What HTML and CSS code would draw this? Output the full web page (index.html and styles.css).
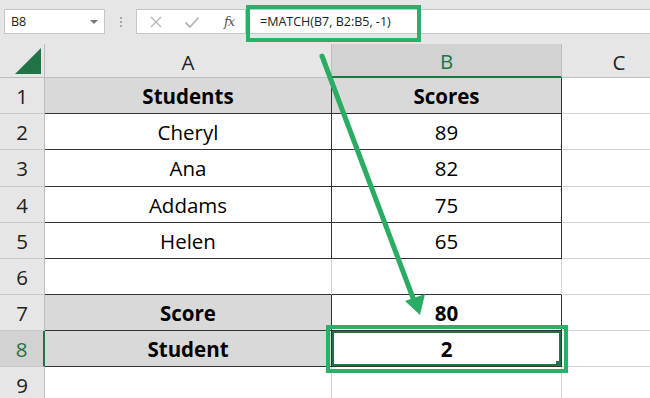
FILE: index.html
```html
<!DOCTYPE html>
<html>
<head>
<meta charset="utf-8">
<link rel="stylesheet" href="styles.css">
</head>
<body>
<div class="app">
  <div class="fbar">
    <div class="namebox"><span class="nb-text">B8</span><span class="nb-arrow"></span></div>
    <div class="dots"><i></i><i></i><i></i></div>
    <div class="tools">
      <svg class="ico" width="14" height="14" viewBox="0 0 14 14"><path d="M2 2 L12 12 M12 2 L2 12" stroke="#b5b5b5" stroke-width="1.3" fill="none"/></svg>
      <svg class="ico" width="16" height="14" viewBox="0 0 16 14"><path d="M1.5 7.5 L6 12 L14.5 2.5" stroke="#b5b5b5" stroke-width="1.8" fill="none"/></svg>
      <span class="fx">fx</span>
    </div>
    <div class="finput"><span class="ftext">=MATCH(B7, B2:B5, -1)</span></div>
  </div>
  <div class="sheet">
    <div class="corner"><span class="tri"></span></div>
    <div class="ch">A</div>
    <div class="ch sel">B</div>
    <div class="ch last">C</div>

    <div class="rh">1</div>
    <div class="c fill b bd">Students</div>
    <div class="c fill b bd">Scores</div>
    <div class="c last"></div>

    <div class="rh">2</div>
    <div class="c bd">Cheryl</div>
    <div class="c bd">89</div>
    <div class="c last"></div>

    <div class="rh">3</div>
    <div class="c bd">Ana</div>
    <div class="c bd">82</div>
    <div class="c last"></div>

    <div class="rh">4</div>
    <div class="c bd">Addams</div>
    <div class="c bd">75</div>
    <div class="c last"></div>

    <div class="rh">5</div>
    <div class="c bd">Helen</div>
    <div class="c bd">65</div>
    <div class="c last"></div>

    <div class="rh">6</div>
    <div class="c bdb"></div>
    <div class="c bdb"></div>
    <div class="c last"></div>

    <div class="rh">7</div>
    <div class="c fill b bd">Score</div>
    <div class="c b bd">80</div>
    <div class="c last"></div>

    <div class="rh selr">8</div>
    <div class="c fill b bd">Student</div>
    <div class="c b bd active">2<span class="handle"></span></div>
    <div class="c last"></div>

    <div class="rh">9</div>
    <div class="c"></div>
    <div class="c"></div>
    <div class="c last"></div>
  </div>

  <div class="hl hl-formula"></div>
  <div class="hl hl-cell"></div>
  <svg class="arrow" width="650" height="398" viewBox="0 0 650 398">
    <line x1="322" y1="56" x2="413" y2="298" stroke="#2aad62" stroke-width="5" stroke-linecap="round"/>
    <polygon points="405,301 425,294 420,315" fill="#2aad62"/>
  </svg>
</div>
</body>
</html>
```

FILE: styles.css
```css
* { box-sizing: border-box; }
html, body { margin: 0; padding: 0; }
body { width: 650px; height: 398px; overflow: hidden; background: #fff; }
.app { position: relative; width: 650px; height: 398px; overflow: hidden; }

.fbar {
  height: 44px;
  background: #e6e6e6;
  display: flex;
  align-items: flex-start;
  padding-top: 9px;
  padding-left: 4px;
  font-family: "Open Sans", "Noto Sans", sans-serif;
}
.namebox {
  width: 101px; height: 25px;
  background: #fff;
  border: 1px solid #c6c6c6;
  display: flex; align-items: center; justify-content: space-between;
  padding: 0 6px 0 6px;
}
.nb-text { font-size: 12.5px; color: #222; }
.nb-arrow {
  width: 0; height: 0;
  border-left: 4px solid transparent; border-right: 4px solid transparent;
  border-top: 4px solid #777;
}
.dots {
  width: 31px; height: 25px;
  display: flex; flex-direction: column; align-items: center; justify-content: center; gap: 2px;
}
.dots i { display: block; width: 2px; height: 2px; background: #a8a8a8; }
.tools {
  width: 110px; height: 25px;
  background: #fff;
  border: 1px solid #c6c6c6;
  display: flex; align-items: center;
  padding-left: 12px; gap: 21px;
}
.fx { font-family: "DejaVu Serif", "Liberation Serif", serif; font-style: italic; font-size: 13px; color: #555; margin-left: 3px; letter-spacing: -1px; }
.finput {
  flex: 1; height: 25px;
  background: #fff;
  border-top: 1px solid #c6c6c6; border-bottom: 1px solid #c6c6c6;
  display: flex; align-items: center;
  padding-left: 14px;
}
.ftext { font-size: 12.5px; color: #222; }

.sheet {
  display: grid;
  grid-template-columns: 45px 287px 230px 115px;
  grid-template-rows: 34px 36px 36px 37px 36px 36px 36px 36px 36px 36px;
  font-family: "Open Sans", "Lato", sans-serif;
  font-size: 20.5px;
  color: #000;
}
.sheet > div {
  display: flex; align-items: center; justify-content: center;
  border-right: 1px solid #d4d4d4;
  border-bottom: 1px solid #d4d4d4;
  position: relative;
}
.corner { background: #e6e6e6; border-right-color: #bdbdbd !important; border-bottom-color: #bdbdbd !important; }
.tri {
  position: absolute; right: 3px; bottom: 3px;
  width: 0; height: 0;
  border-left: 26px solid transparent;
  border-bottom: 26px solid #217346;
}
.ch { background: #e6e6e6; color: #222; border-right-color: #bdbdbd !important; border-bottom-color: #bdbdbd !important; padding-top: 2px; }
.ch.sel { background: #d2d2d2; color: #217346; border-bottom: 2px solid #217346 !important; }
.rh { background: #e6e6e6; color: #222; border-right-color: #bdbdbd !important; border-bottom-color: #c8c8c8 !important; }
.rh.selr { background: #d2d2d2; color: #217346; border-right: 2px solid #217346 !important; }

.c.fill { background: #d9d9d9; }
.c.b { font-weight: 700; }
.c.bd { border-right-color: #333; border-bottom-color: #333; }
.c.bdb { border-bottom-color: #333; }
.active { box-shadow: inset 0 0 0 2px #217346; }
.handle {
  position: absolute; right: 0; bottom: 0;
  width: 5px; height: 5px; background: #217346;
}

.hl { position: absolute; border: 4px solid #2bb068; pointer-events: none; }
.hl-formula { left: 246px; top: 5px; width: 175px; height: 37px; }
.hl-cell { left: 326px; top: 325px; width: 242px; height: 48px; }
.arrow { position: absolute; left: 0; top: 0; }
```
